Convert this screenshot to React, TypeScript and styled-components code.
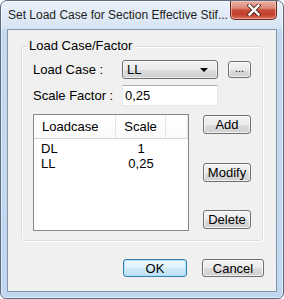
import React from "react";
import styled, { createGlobalStyle } from "styled-components";

const Global = createGlobalStyle`
  html, body { margin: 0; padding: 0; background: #ffffff; }
  body { font-family: "Liberation Sans", Arial, sans-serif; }
  * { box-sizing: border-box; }
`;

const Window = styled.div`
  width: 284px;
  height: 299px;
  border: 1px solid #5b6c80;
  border-radius: 7px 7px 6px 6px;
  background: linear-gradient(#eaf1fa 0px, #dde8f5 20px, #d3e2f3 28px, #c4d9f0 29px, #c1d7ef 100%);
  box-shadow: inset 0 0 0 1px rgba(255, 255, 255, 0.55);
  display: flex;
  flex-direction: column;
  padding: 0 6px 6px 6px;
  overflow: hidden;
`;

const TitleBar = styled.div`
  height: 28px;
  display: flex;
  align-items: flex-start;
  justify-content: space-between;
  flex: none;
`;

const TitleText = styled.div`
  padding: 7px 0 0 1px;
  font-size: 12px;
  line-height: 14px;
  color: #1e1e1e;
  white-space: nowrap;
  overflow: hidden;
  width: 222px;
`;

const CloseButton = styled.div`
  width: 47px;
  height: 19px;
  border: 1px solid #6d2a22;
  border-top: none;
  border-radius: 0 0 5px 5px;
  background: linear-gradient(#eab0a4 0%, #de8a78 40%, #c84a35 50%, #c3412c 75%, #d7705a 100%);
  box-shadow: inset 0 0 0 1px rgba(255, 220, 210, 0.5);
  display: flex;
  align-items: center;
  justify-content: center;
`;

const Client = styled.div`
  flex: 1;
  border: 1px solid #8594a6;
  background: #f0f0f0;
  display: flex;
  flex-direction: column;
  font-size: 13px;
  color: #000;
`;

const Group = styled.div`
  position: relative;
  margin: 16px 0 0 13px;
  width: 242px;
  height: 195px;
  border: 1px solid #d5dfe5;
  border-radius: 3px;
  box-shadow: inset 1px 1px 0 #ffffff, 1px 1px 0 #ffffff;
  padding: 13px 0 9px 11px;
  display: flex;
  flex-direction: column;
`;

const Legend = styled.div`
  position: absolute;
  top: -9px;
  left: 6px;
  padding: 0 2px 0 1px;
  background: #f0f0f0;
  line-height: 16px;
  font-size: 13px;
`;

const FieldRow = styled.div<{ $gap?: number; $h: number }>`
  display: flex;
  align-items: center;
  height: ${(p) => p.$h}px;
  margin-top: ${(p) => p.$gap ?? 0}px;
`;

const Label = styled.div`
  width: 89px;
  line-height: 15px;
  white-space: nowrap;
`;

const Combo = styled.div`
  width: 96px;
  height: 19px;
  border: 1px solid #707070;
  border-radius: 3px;
  background: linear-gradient(#f2f2f2 0%, #ebebeb 50%, #dddddd 51%, #cfcfcf 100%);
  box-shadow: inset 0 0 0 1px rgba(255, 255, 255, 0.6);
  display: flex;
  align-items: center;
  justify-content: space-between;
  padding: 0 9px 0 4px;
  line-height: 15px;
`;

const Arrow = styled.div`
  width: 0;
  height: 0;
  border-left: 4px solid transparent;
  border-right: 4px solid transparent;
  border-top: 4px solid #000;
`;

const Button = styled.div<{ $w: number; $h?: number; $default?: boolean }>`
  width: ${(p) => p.$w}px;
  height: ${(p) => p.$h ?? 19}px;
  border: 1px solid ${(p) => (p.$default ? "#3c7fb1" : "#707070")};
  border-radius: 3px;
  background: ${(p) =>
    p.$default
      ? "linear-gradient(#eaf6fd 0%, #e0f1fb 50%, #cfe9f8 51%, #bfe0f3 100%)"
      : "linear-gradient(#f2f2f2 0%, #ebebeb 50%, #dddddd 51%, #cfcfcf 100%)"};
  box-shadow: ${(p) =>
    p.$default ? "inset 0 0 0 1px #a9e1fa" : "inset 0 0 0 1px rgba(255, 255, 255, 0.7)"};
  display: flex;
  align-items: center;
  justify-content: center;
  line-height: 15px;
  flex: none;
`;

const DotsButton = styled(Button)`
  margin-left: 10px;
  align-items: flex-end;
  padding-bottom: 1px;
  font-size: 11px;
`;

const TextInput = styled.div`
  width: 96px;
  height: 21px;
  border: 1px solid #e3e9ef;
  border-top-color: #abadb3;
  background: #fff;
  display: flex;
  align-items: center;
  padding-left: 2px;
  line-height: 15px;
`;

const ListArea = styled.div`
  display: flex;
  margin-top: 8px;
  height: 117px;
`;

const List = styled.div`
  width: 156px;
  height: 117px;
  border: 1px solid #828790;
  background: #fff;
  display: flex;
  flex-direction: column;
`;

const Header = styled.div`
  height: 24px;
  display: grid;
  grid-template-columns: 82px 50px 1fr;
  border-bottom: 1px solid #d5d5d5;
  background: linear-gradient(#ffffff, #fafafa);
`;

const HeadCell = styled.div<{ $align?: string }>`
  display: flex;
  align-items: center;
  justify-content: ${(p) => p.$align ?? "flex-start"};
  padding-left: ${(p) => (p.$align ? 0 : 8)}px;
  border-right: 1px solid #e5e5e5;
  line-height: 15px;
`;

const Row = styled.div`
  display: grid;
  grid-template-columns: 82px 50px 1fr;
  height: 15px;
  line-height: 15px;
  &:first-of-type { margin-top: 2px; }
`;

const Cell = styled.div<{ $center?: boolean }>`
  text-align: ${(p) => (p.$center ? "center" : "left")};
  padding-left: ${(p) => (p.$center ? 0 : 7)}px;
`;

const Rows = styled.div`
  display: flex;
  flex-direction: column;
`;

const SideButtons = styled.div`
  margin-left: 14px;
  display: flex;
  flex-direction: column;
  justify-content: space-between;
  padding: 1px 0 2px 0;
`;

const Footer = styled.div`
  display: flex;
  justify-content: flex-end;
  gap: 15px;
  margin-top: 18px;
  padding-right: 12px;
`;

export default function App() {
  return (
    <>
      <Global />
      <Window>
        <TitleBar>
          <TitleText>Set Load Case for Section Effective Stif...</TitleText>
          <CloseButton>
            <svg width="14" height="12" viewBox="0 0 14 12">
              <path
                d="M2.5 1.5 L11.5 10.5 M11.5 1.5 L2.5 10.5"
                stroke="#5a2a24"
                strokeWidth="4.2"
                strokeLinecap="square"
              />
              <path
                d="M2.5 1.5 L11.5 10.5 M11.5 1.5 L2.5 10.5"
                stroke="#ffffff"
                strokeWidth="2.4"
                strokeLinecap="square"
              />
            </svg>
          </CloseButton>
        </TitleBar>
        <Client>
          <Group>
            <Legend>Load Case/Factor</Legend>
            <FieldRow $h={19}>
              <Label>Load Case :</Label>
              <Combo>
                <span>LL</span>
                <Arrow />
              </Combo>
              <DotsButton $w={23} $h={17}>...</DotsButton>
            </FieldRow>
            <FieldRow $h={21} $gap={6}>
              <Label>Scale Factor :</Label>
              <TextInput>0,25</TextInput>
            </FieldRow>
            <ListArea>
              <List>
                <Header>
                  <HeadCell>Loadcase</HeadCell>
                  <HeadCell $align="center">Scale</HeadCell>
                  <HeadCell $align="center" />
                </Header>
                <Rows>
                  <Row>
                    <Cell>DL</Cell>
                    <Cell $center>1</Cell>
                  </Row>
                  <Row>
                    <Cell>LL</Cell>
                    <Cell $center>0,25</Cell>
                  </Row>
                </Rows>
              </List>
              <SideButtons>
                <Button $w={48}>Add</Button>
                <Button $w={48}>Modify</Button>
                <Button $w={48}>Delete</Button>
              </SideButtons>
            </ListArea>
          </Group>
          <Footer>
            <Button $w={64} $h={18} $default>OK</Button>
            <Button $w={62} $h={18}>Cancel</Button>
          </Footer>
        </Client>
      </Window>
    </>
  );
}
